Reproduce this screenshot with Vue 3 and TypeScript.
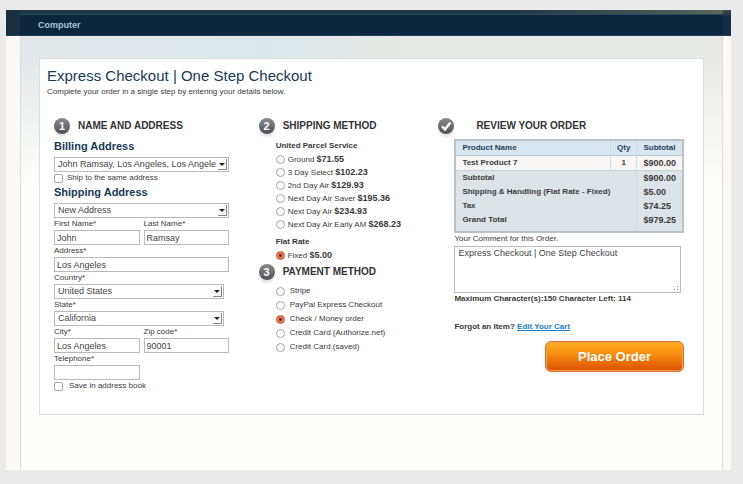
<script setup lang="ts">
import { computed, reactive, ref } from 'vue'

interface Rate {
  id: string
  label: string
  price: string
}

const MAX_CHARS = 150

const upsRates: Rate[] = [
  { id: 'ground', label: 'Ground', price: '$71.55' },
  { id: 'three-day', label: '3 Day Select', price: '$102.23' },
  { id: 'second-day', label: '2nd Day Air', price: '$129.93' },
  { id: 'saver', label: 'Next Day Air Saver', price: '$195.36' },
  { id: 'next-day', label: 'Next Day Air', price: '$234.93' },
  { id: 'early', label: 'Next Day Air Early AM', price: '$268.23' },
]
const flatRates: Rate[] = [{ id: 'fixed', label: 'Fixed', price: '$5.00' }]

const payments = [
  { id: 'stripe', label: 'Stripe' },
  { id: 'paypal', label: 'PayPal Express Checkout' },
  { id: 'check', label: 'Check / Money order' },
  { id: 'authorize', label: 'Credit Card (Authorize.net)' },
  { id: 'saved', label: 'Credit Card (saved)' },
]

const totals = [
  { label: 'Subtotal', value: '$900.00' },
  { label: 'Shipping & Handling (Flat Rate - Fixed)', value: '$5.00' },
  { label: 'Tax', value: '$74.25' },
  { label: 'Grand Total', value: '$979.25' },
]

const form = reactive({
  first: 'John',
  last: 'Ramsay',
  address: 'Los Angeles',
  city: 'Los Angeles',
  zip: '90001',
  phone: '',
  same: false,
  save: false,
})
const shipping = ref('fixed')
const payment = ref('check')
const comment = ref('Express Checkout | One Step Checkout')
const charsLeft = computed(() => MAX_CHARS - comment.value.length)
</script>

<template>
  <div class="frame">
    <header class="topbar">
      <nav><a href="#computer">Computer</a></nav>
    </header>
    <div class="backdrop">
      <main class="page">
        <form class="card" @submit.prevent>
          <h1>Express Checkout | One Step Checkout</h1>
          <p class="intro">Complete your order in a single step by entering your details below.</p>

          <div class="columns">
            <section class="address">
              <h2><span class="badge">1</span>NAME AND ADDRESS</h2>
              <div class="body">
                <h3><label for="billing">Billing Address</label></h3>
                <div class="select">
                  <select id="billing"><option>John Ramsay, Los Angeles, Los Angele</option></select>
                  <span class="arrow"></span>
                </div>
                <label class="tick"><input v-model="form.same" type="checkbox" />Ship to the same address</label>
                <h3><label for="shipping">Shipping Address</label></h3>
                <div class="select">
                  <select id="shipping"><option>New Address</option></select>
                  <span class="arrow"></span>
                </div>
                <div class="pair">
                  <div class="field"><label for="first">First Name*</label><input id="first" v-model="form.first" type="text" /></div>
                  <div class="field"><label for="last">Last Name*</label><input id="last" v-model="form.last" type="text" /></div>
                </div>
                <div class="field"><label for="addr">Address*</label><input id="addr" v-model="form.address" type="text" /></div>
                <div class="field short">
                  <label for="country">Country*</label>
                  <div class="select"><select id="country"><option>United States</option></select><span class="arrow"></span></div>
                </div>
                <div class="field short">
                  <label for="state">State*</label>
                  <div class="select"><select id="state"><option>California</option></select><span class="arrow"></span></div>
                </div>
                <div class="pair">
                  <div class="field"><label for="city">City*</label><input id="city" v-model="form.city" type="text" /></div>
                  <div class="field"><label for="zip">Zip code*</label><input id="zip" v-model="form.zip" type="text" /></div>
                </div>
                <div class="pair">
                  <div class="field"><label for="phone">Telephone*</label><input id="phone" v-model="form.phone" type="tel" /></div>
                </div>
                <label class="tick wide"><input v-model="form.save" type="checkbox" />Save in address book</label>
              </div>
            </section>

            <section class="methods">
              <h2><span class="badge">2</span>SHIPPING METHOD</h2>
              <div class="body">
                <h4>United Parcel Service</h4>
                <label v-for="rate in upsRates" :key="rate.id" class="option">
                  <input v-model="shipping" type="radio" name="shipping" :value="rate.id" />
                  <span>{{ rate.label }} <b>{{ rate.price }}</b></span>
                </label>
                <h4 class="flat">Flat Rate</h4>
                <label v-for="rate in flatRates" :key="rate.id" class="option">
                  <input v-model="shipping" type="radio" name="shipping" :value="rate.id" />
                  <span>{{ rate.label }} <b>{{ rate.price }}</b></span>
                </label>
              </div>
              <h2><span class="badge">3</span>PAYMENT METHOD</h2>
              <div class="body payments">
                <label v-for="item in payments" :key="item.id" class="option">
                  <input v-model="payment" type="radio" name="payment" :value="item.id" />
                  <span>{{ item.label }}</span>
                </label>
              </div>
            </section>

            <section class="review">
              <h2>
                <span class="badge">
                  <svg viewBox="0 0 16 16" aria-hidden="true"><path d="M4 8.2 7 11.4 12.4 4.4" /></svg>
                </span>REVIEW YOUR ORDER
              </h2>
              <div class="body">
                <table>
                  <thead>
                    <tr><th class="name">Product Name</th><th class="qty">Qty</th><th class="sum">Subtotal</th></tr>
                  </thead>
                  <tbody>
                    <tr><td>Test Product 7</td><td class="qty">1</td><td class="money">$900.00</td></tr>
                  </tbody>
                  <tfoot>
                    <tr v-for="row in totals" :key="row.label">
                      <td colspan="2">{{ row.label }}</td><td class="money">{{ row.value }}</td>
                    </tr>
                  </tfoot>
                </table>
                <label class="comment-label" for="comment">Your Comment for this Order.</label>
                <div class="comment">
                  <textarea id="comment" v-model="comment" :maxlength="MAX_CHARS"></textarea>
                  <svg class="grip" viewBox="0 0 4 4" aria-hidden="true">
                    <path d="M3 0h1v1H3zM0 3h1v1H0zM3 3h1v1H3z" />
                  </svg>
                </div>
                <p class="count">Maximum Character(s):{{ MAX_CHARS }} Character Left: {{ charsLeft }}</p>
                <p class="forgot">Forgot an Item? <a href="#cart">Edit Your Cart</a></p>
                <button type="submit">Place Order</button>
              </div>
            </section>
          </div>
        </form>
      </main>
    </div>
  </div>
</template>

<style>
body {
  margin: 0;
  background: #ebebeb;
}
</style>

<style scoped>
* {
  box-sizing: border-box;
}
.frame {
  margin: 10px 12px 14px 6px;
  font: 8px/12px 'Liberation Sans', Arial, sans-serif;
  color: #3a3a3a;
}
.topbar {
  height: 26px;
  padding: 5px 32px 0;
  border-bottom: 1px solid #203b52;
  background:
    linear-gradient(#1a3142, #182f42) left / 14px 100% no-repeat,
    linear-gradient(#3f5050, #142c43 30%) right / 8px 100% no-repeat,
    linear-gradient(#2b4a58, #2b4a58) 0 4px / 100% 1px no-repeat,
    linear-gradient(90deg, #203745 70%, #5a6859) top / 100% 4px no-repeat,
    #0a273d;
}
.topbar a {
  color: #a9c6d8;
  font-size: 9px;
  line-height: 20px;
  font-weight: bold;
  text-decoration: none;
}
.backdrop {
  padding: 0 8px 0 14px;
  background: #faf9f5;
}
.page {
  padding: 22px 18px 55px;
  border: solid #dddddb;
  border-width: 0 1px;
  background:
    linear-gradient(rgba(254, 254, 252, 0) 20px, #fefefc 150px),
    linear-gradient(90deg, #e2e8ea, #dde7eb 35%, #e7eae5 55%, #e7eae6);
}
.card {
  padding: 8px 19px 22px 7px;
  border: 1px solid #dcdfe0;
  background: #fff;
}
h1,
h2,
h3,
h4,
p {
  margin: 0;
}
h1 {
  color: #173a55;
  font-size: 15px;
  line-height: 18px;
  font-weight: normal;
}
.intro {
  margin-top: 1px;
}
.columns {
  display: grid;
  grid-template-columns: 205fr 180fr 246fr;
  padding: 18px 0 0 7px;
}
h2 {
  display: flex;
  align-items: center;
  gap: 8px;
  height: 20px;
  color: #333;
  font-size: 10px;
  line-height: 16px;
}
.badge {
  display: grid;
  place-items: center;
  width: 16px;
  height: 16px;
  border-radius: 50%;
  background: linear-gradient(#8b8b8b, #4d5053);
  box-shadow: 0 3px 2px #e6e6e6;
  color: #fff;
  font-size: 11px;
}
.badge svg {
  width: 16px;
  height: 16px;
  fill: none;
  stroke: #fff;
  stroke-width: 2.4;
}
h3 {
  color: #173a55;
  font-size: 11px;
  line-height: 16px;
}
.address .body {
  width: 175px;
  padding-top: 2px;
}
.address h3 + .select {
  margin-top: 3px;
}
input[type='text'],
input[type='tel'],
select,
textarea {
  display: block;
  width: 100%;
  height: 15px;
  margin: 0;
  padding: 0 3px;
  border: 1px solid #b9b9b9;
  border-radius: 0;
  background: #fff;
  color: #444;
  font: 9px/13px 'Liberation Sans', Arial, sans-serif;
  appearance: none;
}
input[type='text'],
input[type='tel'] {
  padding: 0 2px;
}
.select {
  position: relative;
}
.arrow {
  position: absolute;
  top: 2px;
  right: 2px;
  display: grid;
  place-items: center;
  width: 9px;
  height: 11px;
  border: solid #8a8a8a;
  border-width: 0 1px 1px 0;
  background: #fbfbfb;
  pointer-events: none;
}
.arrow::before {
  content: '';
  border: solid transparent;
  border-width: 3px 3px 0;
  border-top-color: #222;
}
.pair {
  display: grid;
  grid-template-columns: 1fr 1fr;
  gap: 4px;
}
.field label {
  display: block;
}
.short {
  width: 170px;
}
.tick {
  display: flex;
  align-items: center;
  gap: 4px;
}
.tick.wide {
  gap: 6px;
}
.tick input,
.option input {
  flex: none;
  width: 9px;
  height: 9px;
  margin: 0;
  border: 1px solid #a5a5a5;
  border-radius: 2px;
  background: #fff;
  appearance: none;
}
.tick input:checked {
  background: #555;
}
.option input {
  border-radius: 50%;
}
.option input:checked {
  border-color: #cc5a35;
  background: radial-gradient(circle, #6b2412 1px, #f0764b 2px);
}
.methods .body {
  padding: 3px 0 0 17px;
}
h4 {
  font-size: 8px;
  line-height: 14px;
}
.flat {
  margin-top: 4px;
}
.option {
  display: flex;
  align-items: center;
  gap: 3px;
  height: 13px;
}
.option b {
  font-size: 9px;
}
.methods .payments {
  padding-top: 2px;
}
.payments .option {
  gap: 5px;
  height: 14px;
}
.review h2 {
  gap: 22px;
}
.review .body {
  padding: 3px 0 0 16px;
}
table {
  width: 100%;
  border: 2px solid #bcc3c6;
  border-collapse: collapse;
  background: #dde4e8;
  font-weight: bold;
}
th,
td {
  padding: 1px 6px;
  text-align: left;
}
thead {
  background: #d9e6f0;
  color: #24425c;
}
th {
  height: 15px;
  border-bottom: 1px solid #b6cbd8;
}
tbody td {
  height: 15px;
  border-bottom: 1px solid #c5d0d3;
  background: #f8f6f5;
}
tfoot td {
  height: 14px;
}
tfoot tr:last-child td {
  padding-bottom: 5px;
}
.qty {
  width: 26px;
  text-align: center;
  border-left: 1px solid #cfdde5;
  border-right: 1px solid #cfdde5;
}
.sum {
  width: 46px;
}
.money {
  border-left: 1px solid #d3dce1;
  font-size: 9px;
}
.comment-label {
  display: block;
  margin-bottom: 1px;
}
.comment {
  position: relative;
  margin-right: 3px;
}
textarea {
  height: 47px;
  resize: none;
}
.grip {
  position: absolute;
  right: 3px;
  bottom: 3px;
  width: 4px;
  height: 4px;
  fill: #888;
}
.count,
.forgot {
  font-weight: bold;
}
.forgot {
  margin-top: 16px;
}
.forgot a {
  color: #1d80c9;
}
button {
  display: block;
  width: 139px;
  height: 31px;
  margin: 8px 0 0 auto;
  border: 1px solid #d9722c;
  border-radius: 6px;
  background: linear-gradient(#ffb01c, #f58a10 45%, #dc4f03);
  box-shadow: inset 0 0 0 1px #f6a04a;
  color: #fff;
  font: bold 13px/16px 'Liberation Sans', Arial, sans-serif;
}
</style>
